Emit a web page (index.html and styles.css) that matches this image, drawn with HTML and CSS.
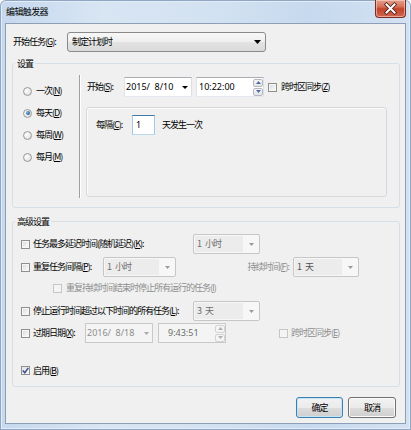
FILE: index.html
```html
<!DOCTYPE html>
<html lang="zh-CN">
<head>
<meta charset="utf-8">
<title>编辑触发器</title>
<link rel="stylesheet" href="styles.css">
</head>
<body>
<div class="window">
  <div class="titlebar">
    <span class="title">编辑触发器</span>
    <div class="close">
      <svg width="29" height="15" viewBox="0 0 29 15"><path d="M10.5 3.5 L18.5 11.5 M18.5 3.5 L10.5 11.5" stroke="#4a1a14" stroke-width="3.6" stroke-linecap="square"/><path d="M10.5 3.5 L18.5 11.5 M18.5 3.5 L10.5 11.5" stroke="#fff" stroke-width="2" stroke-linecap="square"/></svg>
    </div>
  </div>
  <div class="client">
    <div class="row-begin">
      <span class="lbl lbl-begin">开始任务(<u>G</u>):</span>
      <div class="combo combo-main"><span class="combo-text">制定计划时</span><svg class="arrow" width="7" height="4" viewBox="0 0 7 4"><path d="M0 0h7L3.5 4z" fill="#000"/></svg></div>
    </div>

    <fieldset class="group">
      <legend>设置</legend>
      <div class="settings">
        <div class="freq">
          <div class="radio-row"><span class="rb"></span><span class="lbl">一次(<u>N</u>)</span></div>
          <div class="radio-row"><span class="rb rb-on"></span><span class="lbl">每天(<u>D</u>)</span></div>
          <div class="radio-row"><span class="rb"></span><span class="lbl">每周(<u>W</u>)</span></div>
          <div class="radio-row"><span class="rb"></span><span class="lbl">每月(<u>M</u>)</span></div>
        </div>
        <div class="vdiv"></div>
        <div class="sched">
          <div class="start-row">
            <span class="lbl lbl-start">开始(<u>S</u>):</span>
            <div class="field date"><span class="ftext">2015/&nbsp; 8/10</span><svg class="darrow" width="6" height="3" viewBox="0 0 6 3"><path d="M0 0h6L3 3z" fill="#000"/></svg></div>
            <div class="field time"><span class="ftext">10:22:00</span>
              <div class="spin"><span class="sbtn"><svg width="5" height="3" viewBox="0 0 5 3"><path d="M0 3h5L2.5 0z" fill="#4f6aa5"/></svg></span><span class="sbtn"><svg width="5" height="3" viewBox="0 0 5 3"><path d="M0 0h5L2.5 3z" fill="#4f6aa5"/></svg></span></div>
            </div>
            <span class="cb cb-tz"></span>
            <span class="lbl">跨时区同步(<u>Z</u>)</span>
          </div>
          <div class="panel">
            <div class="every-row">
              <span class="lbl lbl-every">每隔(<u>C</u>):</span>
              <div class="num">1</div>
              <span class="lbl lbl-after">天发生一次</span>
            </div>
          </div>
        </div>
      </div>
    </fieldset>

    <fieldset class="group group-adv">
      <legend>高级设置</legend>
      <div class="adv">
        <div class="arow">
          <span class="cb"></span>
          <span class="lbl w160">任务最多延迟时间(随机延迟)(<u>K</u>):</span>
          <div class="combo dis w67"><span class="combo-text dtext">1 小时</span><svg class="arrow" width="5" height="3" viewBox="0 0 5 3"><path d="M0 0h5L2.5 3z" fill="#9a9a9a"/></svg></div>
        </div>
        <div class="arow r-b">
          <span class="cb"></span>
          <span class="lbl w70">重复任务间隔(<u>P</u>):</span>
          <div class="combo dis w73"><span class="combo-text dtext">1 小时</span><svg class="arrow" width="5" height="3" viewBox="0 0 5 3"><path d="M0 0h5L2.5 3z" fill="#9a9a9a"/></svg></div>
          <span class="lbl gray lbl-dur">持续时间(<u>F</u>):</span>
          <div class="combo dis w66"><span class="combo-text dtext dark">1 天</span><svg class="arrow" width="5" height="3" viewBox="0 0 5 3"><path d="M0 0h5L2.5 3z" fill="#9a9a9a"/></svg></div>
        </div>
        <div class="arow r-c">
          <span class="cb cb-dis cb-sub"></span>
          <span class="lbl gray">重复持续时间结束时停止所有运行的任务(<u>I</u>)</span>
        </div>
        <div class="arow r-d">
          <span class="cb"></span>
          <span class="lbl w160">停止运行时间超过以下时间的所有任务(<u>L</u>):</span>
          <div class="combo dis w67"><span class="combo-text dtext">3 天</span><svg class="arrow" width="5" height="3" viewBox="0 0 5 3"><path d="M0 0h5L2.5 3z" fill="#9a9a9a"/></svg></div>
        </div>
        <div class="arow r-e">
          <span class="cb"></span>
          <span class="lbl w52">过期日期(<u>X</u>):</span>
          <div class="field date fdis w67"><span class="ftext gtext">2016/&nbsp; 8/18</span><svg class="darrow" width="5" height="3" viewBox="0 0 5 3"><path d="M0 0h5L2.5 3z" fill="#a8a8a8"/></svg></div>
          <div class="field time fdis t2"><span class="ftext ttext">9:43:51</span>
            <div class="spin"><span class="sbtn sdis"><svg width="5" height="3" viewBox="0 0 5 3"><path d="M0 3h5L2.5 0z" fill="#b0b0b0"/></svg></span><span class="sbtn sdis"><svg width="5" height="3" viewBox="0 0 5 3"><path d="M0 0h5L2.5 3z" fill="#b0b0b0"/></svg></span></div>
          </div>
          <span class="cb cb-dis cb-tz2"></span>
          <span class="lbl gray">跨时区同步(<u>E</u>)</span>
        </div>
        <div class="arow r-f">
          <span class="cb cb-on"><svg width="7" height="7" viewBox="0 0 7 7"><path d="M0.8 3.6 L2.8 5.8 L6.3 0.9" fill="none" stroke="#3b4f8c" stroke-width="1.5"/></svg></span>
          <span class="lbl">启用(<u>B</u>)</span>
        </div>
      </div>
    </fieldset>

    <div class="buttons">
      <div class="btn btn-default">确定</div>
      <div class="btn btn-cancel">取消</div>
    </div>
  </div>
</div>
</body>
</html>
```

FILE: styles.css
```css
* { box-sizing: border-box; }

body {
  margin: 0;
  background: #ffffff;
  font-family: "Noto Sans CJK SC", "Noto Sans", sans-serif;
  font-size: 9px;
  color: #000;
}

.window {
  width: 411px;
  height: 430px;
  display: flex;
  flex-direction: column;
  padding: 0 5px 6px 5px;
  background: linear-gradient(to right, #c5d8ee 0%, #d8e5f3 25%, #d2e1f1 55%, #c6d9ee 75%, #d3e2f2 100%);
  box-shadow: inset 0 0 0 1px #8fa7c2, inset 0 0 0 2px #e4edf7;
  border-radius: 6px 6px 0 0;
}

.titlebar {
  height: 23px;
  display: flex;
  align-items: flex-start;
  flex-shrink: 0;
}

.title {
  line-height: 24px;
  padding-left: 1px;
  letter-spacing: -0.6px;
}

.close {
  margin-left: auto;
  width: 31px;
  height: 18px;
  border: 1px solid #7a2c22;
  border-top: none;
  border-radius: 0 0 4px 4px;
  background: linear-gradient(#e3a08f 0%, #d66e58 40%, #c2432c 52%, #cf6650 100%);
  box-shadow: inset 0 0 0 1px rgba(255, 220, 210, 0.55);
  display: flex;
  align-items: center;
  justify-content: center;
}

.client {
  flex: 1;
  border: 1px solid #8c9fb6;
  background: #f0f0f0;
  display: flex;
  flex-direction: column;
}

.lbl {
  white-space: nowrap;
  letter-spacing: -1px;
  line-height: 14px;
}

.gray { color: #8d8d8d; }

u { text-decoration: underline; }

.row-begin {
  display: flex;
  align-items: center;
  height: 20px;
  margin-top: 8px;
  padding-left: 7px;
}

.lbl-begin { width: 54px; }

.combo {
  display: flex;
  align-items: center;
  height: 20px;
  border: 1px solid #8a8a8a;
  border-radius: 3px;
  background: linear-gradient(#f7f7f7 0%, #efefef 50%, #e3e3e3 51%, #dadada 100%);
  padding: 0 4px 0 4px;
}

.combo-main { width: 199px; }

.combo-text {
  flex: 1;
  white-space: pre;
  letter-spacing: -1px;
  word-spacing: 3px;
  line-height: 14px;
}

.combo.dis {
  border: 1px solid #c6c6c6;
  border-radius: 2px;
  background: #f7f7f7;
  padding: 1px 5px 1px 1px;
}

.combo.dis .combo-text {
  align-self: stretch;
  background: #ececec;
  padding-left: 2px;
  margin-right: 6px;
  display: flex;
  align-items: center;
}

.dtext { color: #6d6d6d; }
.dark { color: #505050; }

.w67 { width: 67px; }
.w73 { width: 73px; }
.w66 { width: 66px; }
.w160 { width: 160px; }
.w70 { width: 70px; }
.w52 { width: 52px; }

/* group boxes */
.group {
  border: 1px solid #d5dfe5;
  border-radius: 3px;
  margin: 5px 5px 0 6px;
  padding: 0;
  min-width: 0;
}

.group legend {
  padding: 0 2px;
  margin-left: 2px;
  line-height: 13px;
  letter-spacing: -1px;
}

.group-adv { margin-top: 7px; }

.settings {
  display: flex;
  padding: 5px 0 9px 0;
}

.freq {
  width: 66px;
  padding: 5px 0 0 10px;
}

.radio-row {
  display: flex;
  align-items: center;
  height: 22px;
  gap: 4px;
}

.rb {
  width: 9px;
  height: 9px;
  border-radius: 50%;
  border: 1px solid #9a9a9a;
  background: radial-gradient(circle at 40% 40%, #ffffff 0%, #e6e6e6 60%, #cfcfcf 100%);
  display: flex;
  align-items: center;
  justify-content: center;
  flex-shrink: 0;
}

.rb-on::after {
  content: "";
  width: 4px;
  height: 4px;
  border-radius: 50%;
  background: radial-gradient(circle at 35% 35%, #7fb3e0 0%, #2b5d94 70%, #1c3f6a 100%);
}

.vdiv {
  width: 2px;
  height: 123px;
  border-left: 1px solid #a0a0a0;
  border-right: 1px solid #ffffff;
  flex-shrink: 0;
}

.sched {
  flex: 1;
  padding: 2px 0 0 5px;
}

.start-row {
  display: flex;
  align-items: center;
  height: 20px;
}

.lbl-start {
  width: 38px;
  padding-left: 1px;
}

.field {
  display: flex;
  align-items: center;
  height: 20px;
  border: 1px solid;
  border-color: #abadb3 #dbdfe6 #e3e9ef #e2e3ea;
  background: #ffffff;
  font-family: "Noto Sans", "Noto Sans CJK SC", sans-serif;
}

.ftext {
  flex: 1;
  white-space: nowrap;
  line-height: 14px;
}

.date {
  width: 68px;
  padding: 0 3px 0 1px;
}

.time {
  width: 68px;
  margin-left: 4px;
  padding: 0 0 0 2px;
}

.spin {
  display: flex;
  flex-direction: column;
  gap: 1px;
  width: 10px;
  height: 17px;
}

.sbtn {
  flex: 1;
  border: 1px solid #b4b9c0;
  border-radius: 2px;
  background: linear-gradient(#f7f7f7, #e2e4e8);
  display: flex;
  align-items: center;
  justify-content: center;
}

.sbtn.sdis {
  border-color: #d3d3d3;
  background: #f4f4f4;
}

.fdis {
  border-color: #c9c9c9;
  background: #f4f4f4;
}

.gtext { color: #8d8d8d; }
.ttext { color: #6d6d6d; padding-left: 7px; }

.t2 {
  width: 68px;
  margin-left: 5px;
}

.cb {
  width: 9px;
  height: 9px;
  border: 1px solid #8e8f8f;
  background: linear-gradient(135deg, #d2d5d9 0%, #eeeeee 55%, #fbfbfb 100%);
  box-shadow: inset 0 0 0 1px #f6f6f6;
  flex-shrink: 0;
  margin-right: 3px;
  display: flex;
  align-items: center;
  justify-content: center;
}

.cb-dis {
  border-color: #c6c6c6;
  background: #f4f4f4;
  box-shadow: none;
}

.cb-on {
  background: linear-gradient(135deg, #e4e6ea 0%, #f6f6f6 100%);
  box-shadow: none;
}

.cb-tz {
  margin-left: 4px;
  margin-right: 4px;
}

.cb-sub { margin-right: 4px; }

.cb-tz2 { margin-left: 53px; }

.panel {
  width: 301px;
  height: 90px;
  margin-top: 10px;
  border: 1px solid #d6d9dc;
  border-radius: 3px;
  box-shadow: inset 1px 1px 0 #fbfbfb;
  padding: 7px 0 0 9px;
}

.every-row {
  display: flex;
  align-items: center;
  height: 20px;
}

.lbl-every { width: 36px; }

.num {
  width: 23px;
  height: 20px;
  border: 1px solid;
  border-color: #3d7bad #a4c9e3 #b7d9ed #a4c9e3;
  background: #ffffff;
  padding-left: 3px;
  display: flex;
  align-items: center;
  font-family: "Noto Sans", sans-serif;
  line-height: 14px;
}

.lbl-after { margin-left: 7px; }

/* advanced */
.adv {
  padding: 6px 0 9px 8px;
}

.arow {
  display: flex;
  align-items: center;
  height: 20px;
}

.r-b { margin-top: 3px; }

.lbl-dur {
  width: 117px;
  text-align: right;
  padding-right: 4px;
}

.r-c {
  margin-top: 5px;
  height: 12px;
  padding-left: 32px;
}

.r-d { margin-top: 7px; }
.r-e { margin-top: 2px; }

.r-f {
  margin-top: 21px;
  height: 13px;
}

/* buttons */
.buttons {
  display: flex;
  justify-content: flex-end;
  gap: 5px;
  margin-top: 10px;
  padding-right: 9px;
}

.btn {
  width: 47px;
  height: 21px;
  border: 1px solid #707070;
  border-radius: 3px;
  background: linear-gradient(#f2f2f2 0%, #ebebeb 50%, #dddddd 51%, #cfcfcf 100%);
  box-shadow: inset 0 0 0 1px #fbfbfb;
  display: flex;
  align-items: center;
  justify-content: center;
  letter-spacing: -1px;
  line-height: 14px;
}

.btn-default {
  border-color: #3c7fb1;
  box-shadow: inset 0 0 0 1px #c4e5f6;
}

.btn-cancel { width: 48px; }
```
